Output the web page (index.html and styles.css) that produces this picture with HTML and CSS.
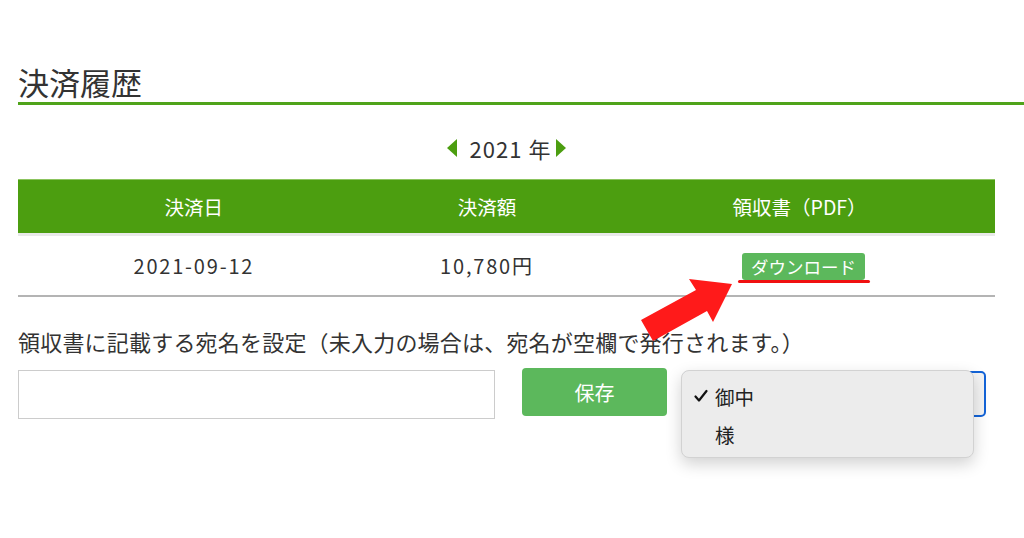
FILE: index.html
```html
<!DOCTYPE html>
<html lang="ja">
<head>
    <meta charset="UTF-8">
    <meta name="viewport" content="width=device-width, initial-scale=1.0">
    <title>決済履歴</title>
    <link rel="stylesheet" href="styles.css">
</head>
<body>
    <h1 class="page-title">決済履歴</h1>

    <div class="content">
        <div class="year-nav">
            <span class="arrow-prev"></span>
            <span class="year-label">2021 年</span>
            <span class="arrow-next"></span>
        </div>

        <table class="history">
            <thead>
                <tr>
                    <th class="col-date">決済日</th>
                    <th class="col-amount">決済額</th>
                    <th class="col-pdf">領収書（PDF）</th>
                </tr>
            </thead>
            <tbody>
                <tr>
                    <td class="num">2021-09-12</td>
                    <td class="num">10,780円</td>
                    <td><a href="#" class="download-button">ダウンロード</a></td>
                </tr>
            </tbody>
        </table>

        <p class="address-label">領収書に記載する宛名を設定（未入力の場合は、宛名が空欄で発行されます。）</p>

        <div class="address-form">
            <input type="text" class="address-input">
            <button class="save-button">保存</button>
            <div class="suffix-select">
                <div class="suffix-menu">
                    <div class="suffix-option">
                        <svg class="check" width="14" height="14" viewBox="0 0 14 14">
                            <path d="M1.5 7.5 L5 11.5 L12.5 2" fill="none" stroke="#111" stroke-width="2.2" stroke-linecap="round" stroke-linejoin="round"/>
                        </svg>
                        御中
                    </div>
                    <div class="suffix-option"><span class="check"></span>様</div>
                </div>
            </div>
        </div>
    </div>

    <!-- 注釈の矢印 -->
    <svg class="pointer-arrow" width="1024" height="538" viewBox="0 0 1024 538">
        <polygon points="641,320 696,290 689,279 732,284 713,322 707,311 653,341" fill="#ff1a1a"/>
    </svg>
</body>
</html>
```

FILE: styles.css
```css
body {
    font-family: 'Noto Sans CJK JP', 'Noto Sans', sans-serif;
    color: #333;
    background-color: #fff;
    margin: 0;
    padding: 0;
    position: relative;
    height: 538px;
    overflow: hidden;
}
.page-title {
    margin: 0 0 0 18px;
    padding-top: 62px;
    font-size: 31px;
    font-weight: normal;
    line-height: 40px;
    border-bottom: 3px solid #4fa31a;
}
.content {
    padding-left: 18px;
    width: 977px;
}
.year-nav {
    display: flex;
    justify-content: center;
    align-items: center;
    height: 40px;
    margin-top: 23px;
}
.year-label {
    font-size: 22px;
    letter-spacing: 1px;
    margin: 0 5px 0 13px;
    line-height: 40px;
}
.arrow-prev {
    width: 0;
    height: 0;
    border-top: 9px solid transparent;
    border-bottom: 9px solid transparent;
    border-right: 10px solid #4c9e10;
}
.arrow-next {
    width: 0;
    height: 0;
    border-top: 9px solid transparent;
    border-bottom: 9px solid transparent;
    border-left: 10px solid #4c9e10;
}
.history {
    width: 977px;
    border-collapse: collapse;
    margin-top: 11px;
}
.history th {
    background-color: #4c9e10;
    color: #fff;
    font-size: 19.5px;
    font-weight: normal;
    height: 53px;
    padding: 0;
    border-top: 1px solid #8cc45e;
    border-bottom: 3px solid #e9e9e9;
}
.col-date {
    width: 36%;
}
.col-amount {
    width: 24%;
}
.history td {
    text-align: center;
    font-size: 20px;
    height: 59px;
    padding: 0;
    border-bottom: 2px solid #b4b4b4;
}
.history td.num {
    letter-spacing: 1.8px;
}
.download-button {
    display: inline-block;
    position: relative;
    margin-left: 8px;
    background-color: #5cb85c;
    color: #fff;
    font-size: 17.5px;
    line-height: 27px;
    padding: 0 9px;
    border-radius: 3px;
    text-decoration: none;
}
.download-button::after {
    content: '';
    position: absolute;
    left: -4px;
    right: -5px;
    bottom: -3px;
    height: 3px;
    border-radius: 2px;
    background-color: #f01010;
}
.address-label {
    margin: 28px 0 0 0;
    font-size: 22px;
    letter-spacing: 0.2px;
    line-height: 32px;
}
.address-form {
    display: flex;
    align-items: flex-start;
    margin-top: 13px;
}
.address-input {
    width: 477px;
    height: 49px;
    box-sizing: border-box;
    border: 1px solid #ccc;
    margin: 0;
    font-size: 18px;
}
.save-button {
    width: 145px;
    height: 48px;
    margin: -2px 0 0 27px;
    border: none;
    border-radius: 4px;
    background-color: #5cb85c;
    color: #fff;
    font-family: inherit;
    font-size: 20px;
    cursor: pointer;
}
.suffix-select {
    position: relative;
    width: 303px;
    height: 46px;
    box-sizing: border-box;
    margin: 1px 0 0 16px;
    border: 2px solid #1464d8;
    border-radius: 5px;
    background-color: #f4f4f4;
}
.suffix-menu {
    position: absolute;
    left: -4px;
    top: -3px;
    width: 293px;
    height: 88px;
    box-sizing: border-box;
    padding-top: 6px;
    background-color: #ececec;
    border: 1px solid #d2d2d2;
    border-radius: 8px;
    box-shadow: 0 6px 16px rgba(0, 0, 0, 0.18);
}
.suffix-option {
    display: flex;
    align-items: center;
    height: 38px;
    font-size: 19.5px;
    color: #222;
}
.check {
    display: inline-block;
    width: 14px;
    margin: 0 7px 0 12px;
}
.pointer-arrow {
    position: absolute;
    left: 0;
    top: 0;
    pointer-events: none;
}
```
